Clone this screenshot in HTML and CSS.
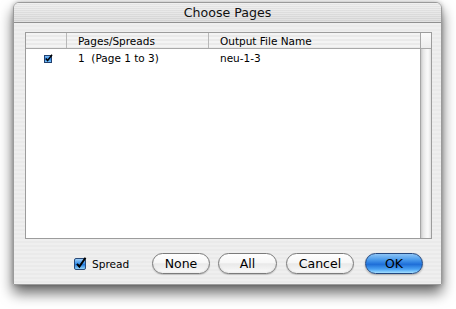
FILE: index.html
```html
<!DOCTYPE html>
<html>
<head>
<meta charset="utf-8">
<link rel="stylesheet" href="styles.css">
</head>
<body>
<div class="window">
  <div class="titlebar">Choose Pages</div>
  <div class="content">
    <div class="table">
      <div class="list">
        <div class="header">
          <div class="hc c1"></div>
          <div class="hc c2">Pages/Spreads</div>
          <div class="hc c3">Output File Name</div>
        </div>
        <div class="row">
          <div class="cell c1">
            <svg class="minicheck" width="9" height="9" viewBox="0 0 9 9">
              <defs>
                <linearGradient id="mb" x1="0" y1="0" x2="0" y2="1">
                  <stop offset="0" stop-color="#8fc8f8"/>
                  <stop offset="0.5" stop-color="#2d86e6"/>
                  <stop offset="1" stop-color="#8ad0ff"/>
                </linearGradient>
              </defs>
              <rect x="0.5" y="1.5" width="7" height="7" fill="url(#mb)" stroke="#23406e"/>
              <path d="M1.8 4.6 L3.6 6.6 L8 0.8" fill="none" stroke="#000" stroke-width="1.5"/>
            </svg>
          </div>
          <div class="cell c2">1&nbsp;&nbsp;(Page 1 to 3)</div>
          <div class="cell c3">neu-1-3</div>
        </div>
      </div>
      <div class="scroll">
        <div class="corner"></div>
        <div class="track"></div>
      </div>
    </div>
    <div class="footer">
      <label class="check">
        <svg width="13" height="13" viewBox="0 0 13 13">
          <defs>
            <linearGradient id="cb" x1="0" y1="0" x2="0" y2="1">
              <stop offset="0" stop-color="#a9d6fb"/>
              <stop offset="0.45" stop-color="#3c93ea"/>
              <stop offset="0.55" stop-color="#2078dc"/>
              <stop offset="1" stop-color="#9fe0ff"/>
            </linearGradient>
          </defs>
          <rect x="0.5" y="1.5" width="11" height="11" rx="1.5" fill="url(#cb)" stroke="#2a4a78"/>
          <path d="M3 6.8 L5.4 9.6 L11.5 0.8" fill="none" stroke="#000" stroke-width="2"/>
        </svg>
        <span>Spread</span>
      </label>
      <button class="btn none">None</button>
      <button class="btn all">All</button>
      <button class="btn cancel">Cancel</button>
      <button class="btn ok">OK</button>
    </div>
  </div>
</div>
</body>
</html>
```
FILE: styles.css
```css
html, body {
  margin: 0;
  padding: 0;
  background: #ffffff;
  width: 456px;
  height: 309px;
  overflow: hidden;
}

body {
  font-family: "DejaVu Sans", "Liberation Sans", sans-serif;
  color: #000;
}

.window {
  box-sizing: border-box;
  margin: 2px 0 0 13px;
  width: 429px;
  height: 283px;
  border: 1px solid #9a9a9a;
  border-radius: 6px 6px 0 0;
  background: repeating-linear-gradient(to bottom, #efefef 0 2px, #eaeaea 2px 4px);
  box-shadow: 0 8px 14px rgba(0, 0, 0, 0.6), 0 0 4px rgba(0, 0, 0, 0.25);
  display: flex;
  flex-direction: column;
}

.titlebar {
  box-sizing: border-box;
  height: 20px;
  border-bottom: 1px solid #8f8f8f;
  border-radius: 5px 5px 0 0;
  background:
    repeating-linear-gradient(to bottom, rgba(255,255,255,0.25) 0 1px, rgba(0,0,0,0.02) 1px 2px),
    linear-gradient(to bottom, #ececec, #d6d6d6);
  font-size: 12.6px;
  line-height: 19px;
  text-align: center;
  color: #111;
}

.content {
  flex: 1;
  display: flex;
  flex-direction: column;
  padding: 9px 10px 0 11px;
}

.table {
  box-sizing: border-box;
  width: 407px;
  height: 207px;
  border: 1px solid #9c9c9c;
  background: #fff;
  display: flex;
}

.list {
  flex: 1;
  display: flex;
  flex-direction: column;
}

.header {
  box-sizing: border-box;
  height: 16px;
  display: flex;
  border-bottom: 1px solid #a9a9a9;
  background:
    repeating-linear-gradient(to bottom, #f4f4f4 0 2px, #eaeaea 2px 4px);
  font-size: 10.5px;
  line-height: 16px;
}

.hc {
  box-sizing: border-box;
  border-right: 1px solid #b8b8b8;
  white-space: nowrap;
}

.c1 { width: 41px; }
.c2 { width: 142px; padding-left: 11px; }
.c3 { flex: 1; padding-left: 11px; }
.header .c3 { border-right: none; }

.row {
  height: 18px;
  display: flex;
  align-items: center;
  font-size: 10.5px;
  line-height: 18px;
}

.cell {
  box-sizing: border-box;
  white-space: nowrap;
}

.row .c1 {
  display: flex;
  justify-content: center;
  align-items: center;
  padding-left: 4px;
}

.minicheck {
  display: block;
  margin-top: 1px;
}

.scroll {
  box-sizing: border-box;
  width: 11px;
  border-left: 1px solid #a6a6a6;
  display: flex;
  flex-direction: column;
}

.corner {
  box-sizing: border-box;
  height: 16px;
  border-bottom: 1px solid #a9a9a9;
  background: linear-gradient(to bottom, #fbfbfb, #ececec);
}

.track {
  flex: 1;
  background: linear-gradient(to right, #c9c9c9 0, #e4e4e4 2px, #f4f4f4 5px, #fafafa 7px, #e2e2e2 10px);
}

.footer {
  margin-top: 14px;
  height: 21px;
  display: flex;
  align-items: center;
  padding-left: 49px;
  padding-right: 8px;
}

.check {
  display: flex;
  align-items: center;
  font-size: 10.6px;
  gap: 5px;
}

.check svg {
  display: block;
  margin-top: -1px;
}

.btn {
  box-sizing: border-box;
  height: 21px;
  padding: 0;
  border: 1px solid #7b7b7b;
  border-radius: 11px;
  font-family: "DejaVu Sans", "Liberation Sans", sans-serif;
  font-size: 12.5px;
  line-height: 19px;
  color: #000;
  background: linear-gradient(to bottom, #ffffff 0%, #f7f7f7 45%, #e9e9e9 52%, #f3f3f3 80%, #ffffff 100%);
  box-shadow: 0 1px 1px rgba(0, 0, 0, 0.18), inset 0 -1px 2px rgba(0,0,0,0.08);
}

.none { width: 58px; margin-left: auto; }
.all { width: 59px; margin-left: 8px; }
.cancel { width: 68px; margin-left: 9px; }
.ok {
  width: 58px;
  margin-left: 11px;
  border-color: #24477e;
  background: linear-gradient(to bottom, #8cc4f5 0%, #4b9bec 30%, #2677dd 50%, #1f6fd8 55%, #4aa2f4 80%, #a4e0ff 100%);
  box-shadow: 0 1px 2px rgba(0, 0, 0, 0.3);
}
```
